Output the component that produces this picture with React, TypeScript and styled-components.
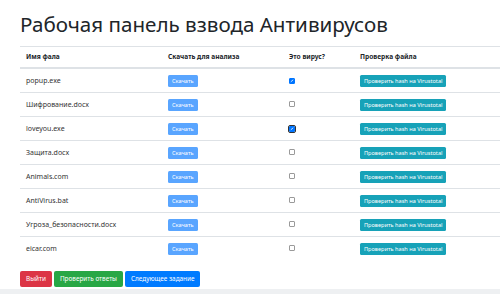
import React from "react";
import styled, { createGlobalStyle } from "styled-components";

const Global = createGlobalStyle`
  html, body { margin: 0; padding: 0; background: #fff; }
  body { font-family: "Noto Sans", "Open Sans", sans-serif; color: #212529; }
`;

const Page = styled.div`
  width: 500px;
  height: 294px;
  overflow: hidden;
  display: flex;
  flex-direction: column;
`;

const Main = styled.main`
  padding: 12px 0 0 20px;
  display: flex;
  flex-direction: column;
`;

const Title = styled.h1`
  margin: 0 0 10px 0;
  font-size: 20.6px;
  line-height: 24px;
  font-weight: 400;
  color: #212529;
  white-space: nowrap;
`;

const Table = styled.table`
  width: 480px;
  border-collapse: collapse;
  table-layout: fixed;
  font-size: 7px;
`;

const Th = styled.th<{ $w?: number }>`
  box-sizing: border-box;
  ${(p) => (p.$w ? `width: ${p.$w}px;` : "")}
  text-align: left;
  font-weight: 700;
  font-size: 6.6px;
  padding: 4px 6px;
  line-height: 12px;
  height: 21px;
  border-top: 1px solid #dee2e6;
  border-bottom: 2px solid #dee2e6;
  color: #212529;
  white-space: nowrap;
`;

const Td = styled.td`
  padding: 0 6px;
  height: 23px;
  line-height: 11px;
  border-top: 1px solid #dee2e6;
  vertical-align: middle;
  color: #333;
  white-space: nowrap;
`;

const SmallBtn = styled.button<{ $bg: string }>`
  display: inline-flex;
  align-items: center;
  justify-content: center;
  height: 12px;
  padding: 0 4px;
  border: none;
  border-radius: 1.5px;
  background: ${(p) => p.$bg};
  color: #fff;
  font-family: inherit;
  font-size: 5.6px;
  line-height: 12px;
  white-space: nowrap;
  margin-top: 1px;
`;

const Check = styled.span<{ $checked?: boolean; $focus?: boolean }>`
  display: inline-flex;
  align-items: center;
  justify-content: center;
  box-sizing: border-box;
  width: 6px;
  height: 6px;
  border-radius: 1px;
  border: 1px solid ${(p) => (p.$checked ? "#0075ff" : "#9a9a9a")};
  background: ${(p) => (p.$checked ? "#0075ff" : "#fff")};
  margin-top: -1px;
  ${(p) => (p.$focus ? "outline: 1px solid #333; outline-offset: 0.5px;" : "")}
  svg { display: block; }
`;

const Actions = styled.div`
  display: flex;
  gap: 2px;
  margin-top: 11px;
`;

const ActionBtn = styled.button<{ $bg: string }>`
  height: 16px;
  padding: 0 6px;
  border: none;
  border-radius: 2px;
  background: ${(p) => p.$bg};
  color: #fff;
  font-family: inherit;
  font-size: 6.4px;
  line-height: 16px;
  white-space: nowrap;
`;

const Footer = styled.footer`
  margin-top: 2px;
  flex: 1;
  background: #eef0f2;
`;

const files: { name: string; checked?: boolean; focus?: boolean }[] = [
  { name: "popup.exe", checked: true },
  { name: "Шифрование.docx" },
  { name: "loveyou.exe", checked: true, focus: true },
  { name: "Защита.docx" },
  { name: "Animals.com" },
  { name: "AntiVirus.bat" },
  { name: "Угроза_безопасности.docx" },
  { name: "eicar.com" },
];

const CheckMark = () => (
  <svg width="4" height="4" viewBox="0 0 4 4">
    <path d="M0.8 2.8 L3.2 0.8" stroke="#fff" strokeWidth="0.8" fill="none" />
  </svg>
);

export default function App() {
  return (
    <Page>
      <Global />
      <Main>
        <Title>Рабочая панель взвода Антивирусов</Title>
        <Table>
          <thead>
            <tr>
              <Th $w={142}>Имя фала</Th>
              <Th $w={121}>Скачать для анализа</Th>
              <Th $w={71}>Это вирус?</Th>
              <Th>Проверка файла</Th>
            </tr>
          </thead>
          <tbody>
            {files.map((f) => (
              <tr key={f.name}>
                <Td>{f.name}</Td>
                <Td>
                  <SmallBtn $bg="#59a5ff">Скачать</SmallBtn>
                </Td>
                <Td>
                  <Check $checked={f.checked} $focus={f.focus}>
                    {f.checked ? <CheckMark /> : null}
                  </Check>
                </Td>
                <Td>
                  <SmallBtn $bg="#17a2b8">Проверить hash на Virustotal</SmallBtn>
                </Td>
              </tr>
            ))}
          </tbody>
        </Table>
        <Actions>
          <ActionBtn $bg="#dc3545">Выйти</ActionBtn>
          <ActionBtn $bg="#28a745">Проверить ответы</ActionBtn>
          <ActionBtn $bg="#007bff">Следующее задание</ActionBtn>
        </Actions>
      </Main>
      <Footer />
    </Page>
  );
}
